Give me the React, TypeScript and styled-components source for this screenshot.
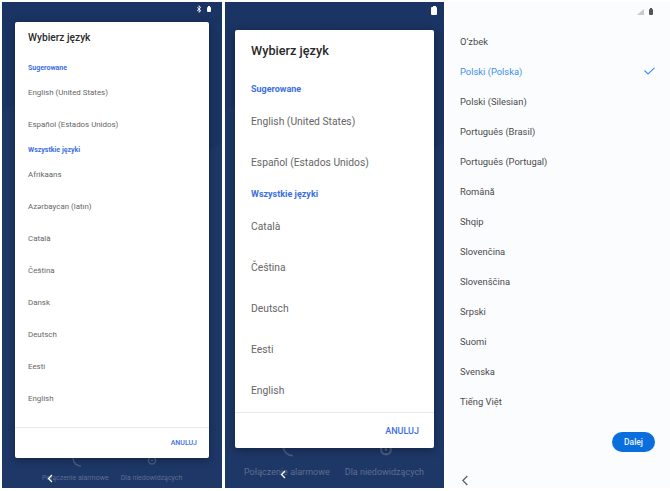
import styled, { createGlobalStyle } from "styled-components";
import { FaBluetoothB } from "react-icons/fa";

const GlobalStyle = createGlobalStyle`
  html, body {
    margin: 0;
    padding: 0;
    background: #ffffff;
    font-family: Roboto, "Liberation Sans", sans-serif;
  }
`;

const Page = styled.div`
  width: 670px;
  height: 491px;
  box-sizing: border-box;
  padding: 2px 0 3px 2px;
  display: grid;
  grid-template-columns: 220px 219px 223px;
  column-gap: 3px;
  overflow: hidden;
`;

const DarkScreen = styled.section`
  position: relative;
  overflow: hidden;
  display: flex;
  flex-direction: column;
  justify-content: space-between;
  background: #1a3463;
`;

const Wave = styled.svg`
  position: absolute;
  inset: 0;
  width: 100%;
  height: 100%;
`;

const StatusBar = styled.div<{ $right: number; $top: number }>`
  position: relative;
  display: flex;
  justify-content: flex-end;
  align-items: center;
  gap: 4px;
  color: #fff;
  padding: ${(p) => p.$top}px ${(p) => p.$right}px 0 0;
`;

const Battery = styled.span<{ $w: number; $h: number; $color?: string }>`
  position: relative;
  display: block;
  width: ${(p) => p.$w}px;
  height: ${(p) => p.$h}px;
  background: ${(p) => p.$color ?? "#ffffff"};
  border-radius: 1px;

  &::before {
    content: "";
    position: absolute;
    top: -1px;
    left: 25%;
    width: 50%;
    height: 1px;
    background: inherit;
  }
`;

const Behind = styled.div<{ $size: number; $pad: number; $gap: number; $left: number }>`
  position: relative;
  display: flex;
  gap: ${(p) => p.$gap}px;
  padding: 0 0 ${(p) => p.$pad}px ${(p) => p.$left}px;
  color: #5d6e8f;
  font-size: ${(p) => p.$size}px;
  white-space: nowrap;
`;

const Dialog = styled.div<{ $left: number; $top: number; $w: number; $h: number }>`
  position: absolute;
  left: ${(p) => p.$left}px;
  top: ${(p) => p.$top}px;
  width: ${(p) => p.$w}px;
  height: ${(p) => p.$h}px;
  display: flex;
  flex-direction: column;
  background: #ffffff;
  border-radius: 2px;
  box-shadow: 0 2px 8px rgba(0, 0, 0, 0.35);
`;

const DialogBody = styled.div<{ $pad: number }>`
  flex: 1;
  min-height: 0;
  overflow: hidden;
  padding: 0 ${(p) => p.$pad}px;
`;

const Title = styled.h2<{ $size: number; $height: number; $after: number }>`
  margin: 0 0 ${(p) => p.$after}px;
  font-size: ${(p) => p.$size}px;
  font-weight: 500;
  color: #2a2a2a;
  line-height: ${(p) => p.$height}px;
`;

const Section = styled.div<{ $size: number; $height: number }>`
  font-size: ${(p) => p.$size}px;
  font-weight: 700;
  color: #3c6fe0;
  line-height: ${(p) => p.$height}px;
`;

const Item = styled.div<{ $size: number; $height: number }>`
  font-size: ${(p) => p.$size}px;
  color: #666666;
  line-height: ${(p) => p.$height}px;
  white-space: nowrap;
`;

const DialogFooter = styled.div<{ $height: number; $pad: number; $size: number }>`
  height: ${(p) => p.$height}px;
  flex-shrink: 0;
  box-sizing: border-box;
  border-top: 1px solid #e8e8e8;
  display: flex;
  align-items: center;
  justify-content: flex-end;
  padding-right: ${(p) => p.$pad}px;
  font-size: ${(p) => p.$size}px;
  font-weight: 500;
  color: #3c6fe0;
`;

const NavBack = styled.svg<{ $left: number; $bottom: number }>`
  position: absolute;
  left: ${(p) => p.$left}px;
  bottom: ${(p) => p.$bottom}px;
  width: 6px;
  height: 9px;
`;

const LightScreen = styled.section`
  position: relative;
  display: flex;
  flex-direction: column;
  background: #fbfcfe;
`;

const LightStatus = styled.div`
  display: flex;
  justify-content: flex-end;
  align-items: center;
  gap: 5px;
  height: 24px;
  box-sizing: border-box;
  padding: 0 17px 4px 0;
`;

const LangList = styled.ul`
  margin: 0;
  padding: 0 15px 0 13px;
  list-style: none;
`;

const Lang = styled.li<{ $active?: boolean }>`
  height: 30px;
  display: flex;
  align-items: center;
  justify-content: space-between;
  font-size: 9.4px;
  color: ${(p) => (p.$active ? "#3d8fe6" : "#4a4a4a")};
`;

const LightFooter = styled.div`
  margin-top: auto;
  display: flex;
  flex-direction: column;
`;

const NextButton = styled.button`
  align-self: flex-end;
  width: 43px;
  height: 20px;
  margin: 0 15px 19px 0;
  padding: 0;
  border: none;
  border-radius: 10px;
  background: #0a6fdc;
  color: #eaf3fd;
  font-family: inherit;
  font-size: 8.5px;
  font-weight: 500;
`;

const BackRow = styled.div`
  height: 17px;
  padding-left: 15px;
`;

const Back = () => (
  <svg width="6" height="11" viewBox="0 0 6 11" fill="none" stroke="#555" strokeWidth="1.1">
    <path d="M5.3 1 L0.8 5.5 L5.3 10" />
  </svg>
);

const BehindIcon = styled.svg<{ $left: number; $top: number; $size: number }>`
  position: absolute;
  left: ${(p) => p.$left}px;
  top: ${(p) => p.$top}px;
  width: ${(p) => p.$size}px;
  height: ${(p) => p.$size}px;
`;

const small = { title: 10.2, titleH: 32, sec: 7, item: 7.9, rowH: 32, secH: 18 };
const large = { title: 12.7, titleH: 42, sec: 9, item: 10.3, rowH: 41, secH: 23 };

const Lists = ({ s, all }: { s: typeof small; all: string[] }) => (
  <>
    <Section $size={s.sec} $height={s.secH}>Sugerowane</Section>
    <Item $size={s.item} $height={s.rowH}>English (United States)</Item>
    <Item $size={s.item} $height={s.rowH}>Español (Estados Unidos)</Item>
    <Section $size={s.sec} $height={s.secH}>Wszystkie języki</Section>
    {all.map((name) => (
      <Item key={name} $size={s.item} $height={s.rowH}>{name}</Item>
    ))}
  </>
);

const PhoneArc = (props: { $left: number; $top: number; $size: number }) => (
  <BehindIcon {...props} viewBox="0 0 10 10" fill="none" stroke="#4b5d82" strokeWidth="1.4">
    <path d="M1 0 C1 5 5 8 9 8" />
  </BehindIcon>
);

const EyeArc = (props: { $left: number; $top: number; $size: number }) => (
  <BehindIcon {...props} viewBox="0 0 10 10" fill="none" stroke="#4b5d82" strokeWidth="1.5">
    <circle cx="5" cy="2.5" r="3.5" />
    <circle cx="5" cy="2.5" r="1" fill="#4b5d82" stroke="none" />
  </BehindIcon>
);

const languages = [
  "O‘zbek",
  "Polski (Polska)",
  "Polski (Silesian)",
  "Português (Brasil)",
  "Português (Portugal)",
  "Română",
  "Shqip",
  "Slovenčina",
  "Slovenščina",
  "Srpski",
  "Suomi",
  "Svenska",
  "Tiếng Việt",
];

const App = () => {
  return (
    <Page>
      <GlobalStyle />
      <DarkScreen>
        <Wave viewBox="0 0 220 486" preserveAspectRatio="none">
          <path d="M0 110 C 60 60, 150 190, 220 140 V486 H0 Z" fill="#1f3a6b" opacity="0.5" />
        </Wave>
        <StatusBar $right={11} $top={3}>
          <FaBluetoothB size={8} />
          <Battery $w={4} $h={5} />
        </StatusBar>
        <Behind $size={7} $pad={6} $gap={12} $left={40}>
          <span>Połączenie alarmowe</span>
          <span>Dla niedowidzących</span>
        </Behind>
        <PhoneArc $left={70} $top={456} $size={10} />
        <EyeArc $left={145} $top={456} $size={10} />
        <Dialog $left={13} $top={20} $w={194} $h={436}>
          <DialogBody $pad={13}>
            <Title $size={small.title} $height={small.titleH} $after={5}>Wybierz język</Title>
            <Lists s={small} all={["Afrikaans", "Azərbaycan (latın)", "Català", "Čeština", "Dansk", "Deutsch", "Eesti", "English", "Español"]} />
          </DialogBody>
          <DialogFooter $height={31} $pad={12} $size={7}>ANULUJ</DialogFooter>
        </Dialog>
        <NavBack $left={45} $bottom={5} viewBox="0 0 6 9" fill="none" stroke="#fff" strokeWidth="1.3">
          <path d="M5 1 L1.5 4.5 L5 8" />
        </NavBack>
      </DarkScreen>

      <DarkScreen>
        <Wave viewBox="0 0 220 486" preserveAspectRatio="none">
          <path d="M0 110 C 60 60, 150 190, 220 140 V486 H0 Z" fill="#1f3a6b" opacity="0.5" />
        </Wave>
        <StatusBar $right={7} $top={5}>
          <Battery $w={6} $h={8} />
        </StatusBar>
        <Behind $size={9} $pad={11} $gap={15} $left={19}>
          <span>Połączenie alarmowe</span>
          <span>Dla niedowidzących</span>
        </Behind>
        <PhoneArc $left={57} $top={444} $size={12} />
        <EyeArc $left={154} $top={444} $size={14} />
        <Dialog $left={10} $top={28} $w={199} $h={418}>
          <DialogBody $pad={16}>
            <Title $size={large.title} $height={large.titleH} $after={6}>Wybierz język</Title>
            <Lists s={large} all={["Català", "Čeština", "Deutsch", "Eesti", "English"]} />
          </DialogBody>
          <DialogFooter $height={36} $pad={15} $size={9}>ANULUJ</DialogFooter>
        </Dialog>
        <NavBack $left={55} $bottom={9} viewBox="0 0 6 9" fill="none" stroke="#fff" strokeWidth="1.3">
          <path d="M5 1 L1.5 4.5 L5 8" />
        </NavBack>
      </DarkScreen>

      <LightScreen>
        <LightStatus>
          <svg width="7" height="6" viewBox="0 0 7 6">
            <path d="M0 6 L7 0 V6 Z" fill="#c9c9c9" />
          </svg>
          <Battery $w={4} $h={6} $color="#555" />
        </LightStatus>
        <LangList>
          {languages.map((name, i) => (
            <Lang key={name} $active={i === 1}>
              {name}
              {i === 1 && (
                <svg width="11" height="8" viewBox="0 0 11 8" fill="none" stroke="#3d8fe6" strokeWidth="1.1">
                  <path d="M0.5 3.5 L4 7 L10.5 0.8" />
                </svg>
              )}
            </Lang>
          ))}
        </LangList>
        <LightFooter>
          <NextButton>Dalej</NextButton>
          <BackRow>
            <Back />
          </BackRow>
        </LightFooter>
      </LightScreen>
    </Page>
  );
};

export default App;
